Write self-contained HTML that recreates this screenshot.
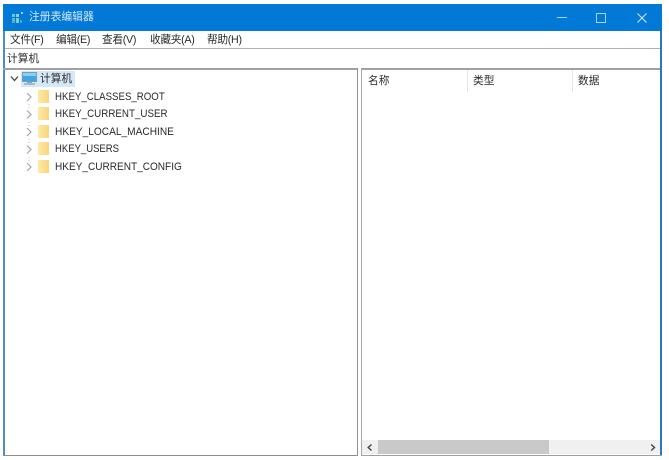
<!DOCTYPE html>
<html>
<head>
<meta charset="utf-8">
<style>
html,body{margin:0;padding:0;background:#fff;width:669px;height:460px;overflow:hidden}
body{font-family:"Liberation Sans","Noto Sans CJK SC",sans-serif;font-size:11px;color:#2a2a2a}
#w{position:relative;width:669px;height:460px;filter:blur(.3px)}
.a{position:absolute}
.t{position:absolute;white-space:nowrap;line-height:14px;transform-origin:0 50%}
.m{font-size:10.7px;letter-spacing:-.3px}
.c{font-size:10.7px}
.f{position:absolute;left:38px;width:11px;height:13px;background:linear-gradient(90deg,#fde9a8,#fad67a)}
svg{position:absolute;overflow:visible}
</style>
</head>
<body>
<div id="w">
<!-- window frame -->
<div class="a" style="left:3px;top:4px;width:659px;height:27px;background:#0279d7"></div>
<div class="a" style="left:3px;top:31px;width:2px;height:425px;background:#4a8fc0"></div>
<div class="a" style="left:660px;top:31px;width:2px;height:425px;background:#2a78bd"></div>
<!-- title -->
<svg style="left:11px;top:11px" width="14" height="14" viewBox="0 0 14 14">
<rect x="1" y="3" width="3" height="3" fill="#6fc4d8"/><rect x="5" y="3" width="3" height="3" fill="#8fd0e0"/>
<rect x="1" y="7" width="3" height="3" fill="#5db8cc"/><rect x="5" y="7" width="3" height="3" fill="#7ccbd8"/>
<rect x="1" y="10" width="3" height="2" fill="#4fb0c0"/><rect x="5" y="10" width="3" height="2" fill="#7ccbd8"/>
<rect x="9" y="9" width="2" height="3" fill="#4aa8c0"/><rect x="10" y="1" width="2" height="2" fill="#9fd4ea"/>
</svg>
<div class="t" style="left:29px;top:10px;color:#d5e9f9;font-size:10.8px">注册表编辑器</div>
<!-- window buttons -->
<div class="a" style="left:557px;top:17px;width:10px;height:1px;background:#a8d2f2"></div>
<div class="a" style="left:596px;top:13px;width:8px;height:8px;border:1px solid #a8d2f2"></div>
<svg style="left:637px;top:13px" width="10" height="10" viewBox="0 0 10 10"><path d="M0.5 0.5L9.5 9.5M9.5 0.5L0.5 9.5" stroke="#cfe5f7" stroke-width="1.1" fill="none"/></svg>
<!-- menu -->
<div class="t m" style="left:10px;top:33px">文件(F)</div>
<div class="t m" style="left:56px;top:33px">编辑(E)</div>
<div class="t m" style="left:102px;top:33px">查看(V)</div>
<div class="t m" style="left:150px;top:33px">收藏夹(A)</div>
<div class="t m" style="left:207px;top:33px">帮助(H)</div>
<!-- address bar -->
<div class="a" style="left:5px;top:48px;width:655px;height:1px;background:#b0b0b0"></div>
<div class="t c" style="left:7px;top:52px">计算机</div>
<div class="a" style="left:3px;top:68px;width:355px;height:2px;background:#a0a0a0"></div>
<div class="a" style="left:361px;top:68px;width:299px;height:2px;background:#a0a0a0"></div>
<!-- splitter borders -->
<div class="a" style="left:357px;top:68px;width:1px;height:388px;background:#8f8f8f"></div>
<div class="a" style="left:361px;top:68px;width:1px;height:388px;background:#a8a8a8"></div>
<!-- bottom -->
<div class="a" style="left:3px;top:455px;width:355px;height:1px;background:#8f8f8f"></div>
<div class="a" style="left:361px;top:455px;width:301px;height:1px;background:#a0a0a0"></div>
<!-- tree root -->
<svg style="left:10px;top:75px" width="10" height="8" viewBox="0 0 10 8"><path d="M1 1.5L4.5 5.5L8 1.5" stroke="#444" stroke-width="1.3" fill="none"/></svg>
<div class="a" style="left:21px;top:71px;width:54px;height:16px;background:#d5e8f8"></div>
<svg style="left:22px;top:72px" width="15" height="14" viewBox="0 0 15 14">
<rect x="0.5" y="0.5" width="14" height="9" fill="#3ea6e6" stroke="#7a9bb0"/>
<rect x="1" y="1" width="13" height="3" fill="#8ad0f4"/>
<rect x="5" y="10" width="5" height="1" fill="#8aa"/>
<rect x="2" y="11" width="11" height="2" fill="#a9bac5"/>
</svg>
<div class="t c" style="left:40px;top:72px">计算机</div>
<!-- tree items -->
<svg style="left:26px;top:93px" width="6" height="80" viewBox="0 0 6 80" fill="none" stroke="#a6a6a6" stroke-width="1.2">
<path d="M1 0L5 4L1 8"/><path d="M1 17.5L5 21.5L1 25.5"/><path d="M1 35L5 39L1 43"/><path d="M1 52.5L5 56.5L1 60.5"/><path d="M1 70L5 74L1 78"/>
<path d="M3 11v1M3 14v1M3 29v1M3 32v1M3 46v1M3 49v1M3 64v1M3 67v1" stroke="#bbb" stroke-width="1"/>
</svg>
<div class="f" style="top:90px"></div>
<div class="f" style="top:107px"></div>
<div class="f" style="top:125px"></div>
<div class="f" style="top:142px"></div>
<div class="f" style="top:160px"></div>
<div class="t" style="left:55px;top:90px;transform:scaleX(.88)">HKEY_CLASSES_ROOT</div>
<div class="t" style="left:55px;top:107px;transform:scaleX(.89)">HKEY_CURRENT_USER</div>
<div class="t" style="left:55px;top:125px;transform:scaleX(.922)">HKEY_LOCAL_MACHINE</div>
<div class="t" style="left:55px;top:142px;transform:scaleX(.865)">HKEY_USERS</div>
<div class="t" style="left:55px;top:160px;transform:scaleX(.914)">HKEY_CURRENT_CONFIG</div>
<!-- list header -->
<div class="t c" style="left:368px;top:74px">名称</div>
<div class="t c" style="left:473px;top:74px">类型</div>
<div class="t c" style="left:578px;top:74px">数据</div>
<div class="a" style="left:467px;top:70px;width:1px;height:22px;background:#e5e5e5"></div>
<div class="a" style="left:572px;top:70px;width:1px;height:22px;background:#e5e5e5"></div>
<!-- scrollbar -->
<div class="a" style="left:362px;top:440px;width:298px;height:14px;background:#f0f0f0"></div>
<div class="a" style="left:378px;top:440px;width:171px;height:14px;background:#c9c9c9"></div>
<svg style="left:367px;top:444px" width="6" height="8" viewBox="0 0 6 8"><path d="M4.5 0.5L1.2 3.5L4.5 6.5" stroke="#444" stroke-width="1.4" fill="none"/></svg>
<svg style="left:650px;top:444px" width="6" height="8" viewBox="0 0 6 8"><path d="M1.2 0.5L4.5 3.5L1.2 6.5" stroke="#444" stroke-width="1.4" fill="none"/></svg>
</div>
</body>
</html>
